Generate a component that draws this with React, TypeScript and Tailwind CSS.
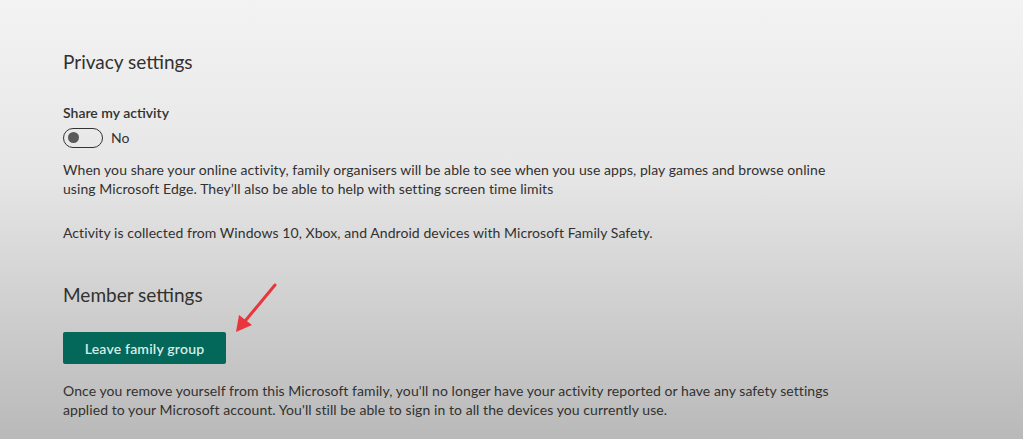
import React from 'react';

const font = { fontFamily: '"Segoe UI", Lato, "Liberation Sans", sans-serif' };

// Switch in the off state
const Toggle: React.FC = () => (
  <div className="flex items-center gap-2">
    <div className="w-[40px] h-[20px] rounded-full border border-[#333333] flex items-center pl-[4px]">
      <div className="w-[11px] h-[11px] rounded-full bg-[#5a5a5a]" />
    </div>
    <span className="text-[14px] text-[#323130]">No</span>
  </div>
);

const App: React.FC = () => {
  return (
    <div
      className="relative w-[1023px] h-[439px] overflow-hidden bg-linear-to-b from-[#f3f3f3] via-[#e6e6e6] via-40% to-[#b9b9b9] text-[#323130]"
      style={font}
    >
      <div className="flex flex-col pl-[63px] pt-[48px] tracking-[0.07px]">
        {/* Privacy settings */}
        <h2 className="text-[19px] leading-[28px] font-normal tracking-normal">Privacy settings</h2>

        <div className="mt-[27px] text-[14px] leading-[20px] font-semibold tracking-normal">Share my activity</div>
        <div className="mt-[4px]">
          <Toggle />
        </div>

        <p className="mt-[12px] text-[14px] leading-[19px]">
          When you share your online activity, family organisers will be able to see when you use apps, play games and browse online
          <br />
          using Microsoft Edge. They’ll also be able to help with setting screen time limits
        </p>

        <p className="mt-[25px] text-[14px] leading-[19px]">
          Activity is collected from Windows 10, Xbox, and Android devices with Microsoft Family Safety.
        </p>

        {/* Member settings */}
        <h2 className="mt-[39px] text-[19px] leading-[28px] font-normal tracking-normal">Member settings</h2>

        <div className="mt-[23px]">
          <button className="w-[163px] h-[32px] rounded-[2px] bg-[#03675a] text-[#d6ece6] text-[14px] font-semibold tracking-[0.2px]">
            Leave family group
          </button>
        </div>

        <p className="mt-[17px] text-[14px] leading-[19px]">
          Once you remove yourself from this Microsoft family, you'll no longer have your activity reported or have any safety settings
          <br />
          applied to your Microsoft account. You'll still be able to sign in to all the devices you currently use.
        </p>
      </div>

      {/* annotation arrow */}
      <svg className="absolute left-[228px] top-[280px]" width="56" height="58" viewBox="0 0 56 58">
        <line x1="47" y1="5" x2="13" y2="46" stroke="#e8363c" strokeWidth="3" strokeLinecap="round" />
        <polygon points="8,52 11,35 24,45" fill="#e8363c" />
      </svg>
    </div>
  );
};

export default App;
